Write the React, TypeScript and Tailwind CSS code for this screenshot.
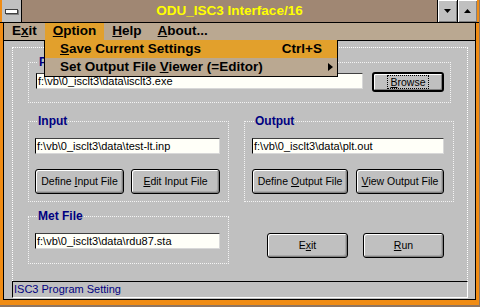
import { ReactNode } from 'react';

const Field = ({ value, className = '' }: { value: string; className?: string }) => (
  <div
    className={`h-[16px] bg-[#fffff8] border border-t-[#404040] border-l-black border-b-[#d8d8d8] border-r-[#d8d8d8] text-[11px] leading-[14px] pl-[1px] whitespace-nowrap overflow-hidden text-black ${className}`}
  >
    {value}
  </div>
);

const Btn = ({ children, className = '' }: { children: ReactNode; className?: string }) => (
  <div
    className={`flex items-center justify-center bg-[#c0c0c0] border border-black rounded-[3px] shadow-[inset_1px_1px_0_#fff,inset_-1px_-1px_0_#808080,inset_-2px_-2px_0_#a8a8a8] text-[10.5px] text-black ${className}`}
  >
    <span className="whitespace-nowrap">{children}</span>
  </div>
);

const Group = ({ label, children, className = '' }: { label: string; children: ReactNode; className?: string }) => (
  <fieldset className={`border border-dotted border-[#f4f4f4] ${className}`}>
    <legend className="ml-[2px] px-[1px] text-[12px] leading-[14px] font-bold text-[#000080]">{label}</legend>
    {children}
  </fieldset>
);

export default function App() {
  return (
    <div className="w-[480px] h-[307px] bg-[#8e7662] overflow-hidden font-['Liberation_Sans',Arial,sans-serif]">
      <div className="relative w-[479px] h-[305px] flex flex-col">
        {/* Title bar */}
        <div className="h-[23px] flex border-b border-black bg-[#a08773]">
          <div className="w-[2px] bg-[#f08c14]" />
          <div className="w-[20px] bg-[#c0c0c0] border-r border-black flex items-center justify-center">
            <div className="w-[13px] h-[5px] bg-white border border-[#404040] shadow-[1px_1px_0_#808080]" />
          </div>
          <div className="flex-1 flex items-center justify-center text-[#ffff00] text-[13.5px] font-bold">
            ODU_ISC3 Interface/16
          </div>
          <div className="w-[20px] bg-[#c0c0c0] border-l border-black flex items-center justify-center shadow-[inset_1px_1px_0_#fff,inset_-1px_-1px_0_#808080]">
            <svg width="8" height="5" viewBox="0 0 8 5"><path d="M0 0h7L3.5 4z" fill="#000" /></svg>
          </div>
          <div className="w-[20px] bg-[#c0c0c0] border-l border-black flex items-center justify-center shadow-[inset_1px_1px_0_#fff,inset_-1px_-1px_0_#808080]">
            <svg width="8" height="5" viewBox="0 0 8 5"><path d="M0 4h7L3.5 0z" fill="#000" /></svg>
          </div>
          <div className="w-[2px] bg-[#f08c14]" />
        </div>

        {/* Window frame */}
        <div className="flex-1 flex flex-col border-x-[3px] border-b-[5px] border-[#f08c14] min-h-0">
          <div className="flex-1 flex flex-col border-x border-b border-black min-h-0">
            {/* Menu bar */}
            <div className="h-[18px] flex border-b border-black bg-[#baa891] text-[13.5px] font-bold text-black">
              <div className="flex items-center px-[8px]"><span>E<span className="underline">x</span>it</span></div>
              <div className="flex items-center px-[8px] bg-[#e2a02c]"><span><span className="underline">O</span>ption</span></div>
              <div className="flex items-center px-[8px]"><span><span className="underline">H</span>elp</span></div>
              <div className="flex items-center px-[8px]"><span><span className="underline">A</span>bout...</span></div>
            </div>

            {/* Client */}
            <div className="flex-1 flex flex-col bg-[#c0c0c0] pl-[8px] pr-[7px] pt-[6px] pb-[1px] min-h-0">
              <div className="flex-1 border-t border-x border-dotted border-white">
                <Group label="Program" className="ml-[15px] mt-[7px] w-[423px] pl-[7px] pt-[3px] pb-[10px]">
                  <div className="flex items-start gap-[9px]">
                    <Field value="f:\vb\0_isclt3\data\isclt3.exe" className="w-[327px] mt-[1px] h-[15px]" />
                    <div className="w-[72px] h-[20px] flex items-center justify-center bg-[#c0c0c0] border-2 border-black rounded-[3px] text-[10.5px] shadow-[inset_1px_1px_0_#fff,inset_-1px_-1px_0_#808080]">
                      <span className="border border-dotted border-black px-[2px] leading-[12px]"><span className="underline">B</span>rowse</span>
                    </div>
                  </div>
                </Group>

                <div className="flex items-start ml-[15px] mt-[11px] gap-[15px]">
                  <Group label="Input" className="w-[201px] pl-[6px] pt-[10px] pb-[7px]">
                    <Field value="f:\vb\0_isclt3\data\test-lt.inp" className="w-[185px]" />
                    <div className="flex gap-[7px] mt-[15px]">
                      <Btn className="w-[89px] h-[25px]">Define <span className="underline">I</span>nput File</Btn>
                      <Btn className="w-[89px] h-[25px]"><span className="underline">E</span>dit Input File</Btn>
                    </div>
                  </Group>
                  <Group label="Output" className="w-[210px] pl-[7px] pt-[10px] pb-[7px]">
                    <Field value="f:\vb\0_isclt3\data\plt.out" className="w-[192px]" />
                    <div className="flex gap-[8px] mt-[15px]">
                      <Btn className="w-[96px] h-[25px]">Define <span className="underline">O</span>utput File</Btn>
                      <Btn className="w-[88px] h-[25px]"><span className="underline">V</span>iew Output File</Btn>
                    </div>
                  </Group>
                </div>

                <div className="flex items-start ml-[15px] mt-[7px]">
                  <Group label="Met File" className="w-[201px] pl-[6px] pt-[10px] pb-[14px]">
                    <Field value="f:\vb\0_isclt3\data\rdu87.sta" className="w-[185px]" />
                  </Group>
                  <div className="flex gap-[15px] ml-[38px] mt-[24px]">
                    <Btn className="w-[81px] h-[25px]">E<span className="underline">x</span>it</Btn>
                    <Btn className="w-[81px] h-[25px]"><span className="underline">R</span>un</Btn>
                  </div>
                </div>
              </div>

              {/* Status bar */}
              <div className="h-[17px] border border-t-black border-l-black border-b-white border-r-white text-[11px] leading-[15px] text-[#000080] pl-[1px]">
                ISC3 Program Setting
              </div>
            </div>
          </div>
        </div>

        {/* Option dropdown */}
        <div className="absolute left-[44px] top-[40px] w-[294px] border-x border-b border-black bg-[#baa891] text-[13.5px] font-bold text-black">
          <div className="h-[18px] flex items-center pl-[15px] pr-[15px] bg-[#e2a02c]">
            <span><span className="underline">S</span>ave Current Settings</span>
            <span className="ml-auto">Ctrl+S</span>
          </div>
          <div className="h-[18px] flex items-center pl-[15px] pr-[3px]">
            <span>Set Output File <span className="underline">V</span>iewer (=Editor)</span>
            <svg className="ml-auto" width="6" height="8" viewBox="0 0 6 8"><path d="M0 0l5 4-5 4z" fill="#000" /></svg>
          </div>
        </div>
      </div>
    </div>
  );
}
